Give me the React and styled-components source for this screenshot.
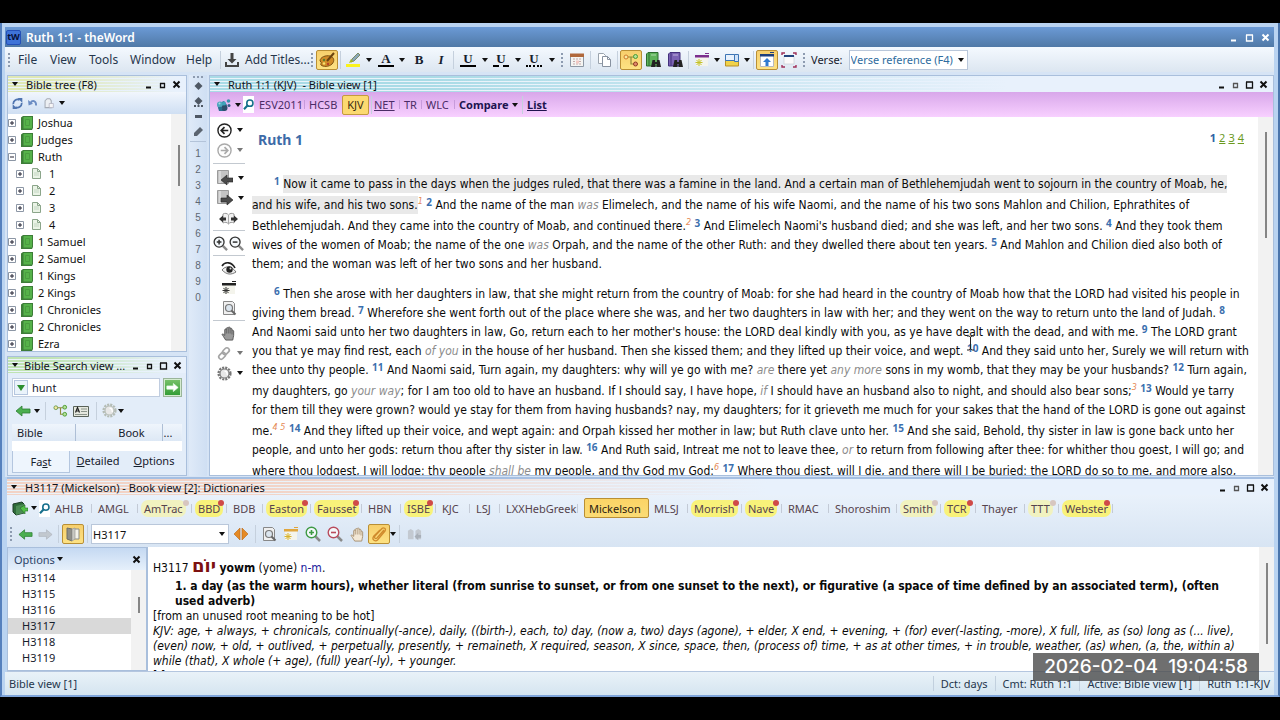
import React from "react"
import styled, { createGlobalStyle, css } from "styled-components"

const GlobalStyle = createGlobalStyle`
  * { box-sizing: border-box; }
  body {
    margin: 0;
    background: #000;
    font-family: "Noto Sans", "Open Sans", sans-serif;
    font-size: 11px;
    color: #16202c;
  }
  button, input, select { font: inherit; color: inherit; margin: 0; }
  button { border: 0; background: none; padding: 0; }
  a { color: inherit; }
  svg { display: block; flex: none; }
`

const Page = styled.div`
  display: flex;
  flex-direction: column;
  height: 100vh;
  padding: 23px 0;
  background: #000;
`

const Window = styled.div`
  position: relative;
  flex: 1;
  min-height: 0;
  display: flex;
  flex-direction: column;
  padding: 4px 4px 0 3px;
  border-left: 2px solid #5580bd;
  border-right: 2px solid #4a74ab;
  border-bottom: 2px solid #7fa5da;
  background: #b9d3f1;
`

const TitleBar = styled.header`
  display: flex;
  align-items: center;
  height: 20px;
  padding: 0 4px 0 1px;
  gap: 5px;
  color: #fff;
  background: linear-gradient(#6b9ad6, #5079a6);
`

const AppTitle = styled.h1`
  flex: 1;
  margin: 0;
  font-size: 12px;
  font-weight: 600;
`

const Logo = styled.span`
  width: 15px;
  height: 15px;
  border: 1px solid #2450b8;
  border-radius: 2px;
  background: #3f73d8;
  color: #06103a;
  font-size: 9px;
  font-weight: 700;
  line-height: 12px;
  text-align: center;
`

const WinButtons = styled.div`
  display: flex;
  align-items: center;
  gap: ${p => p.$gap || 5}px;
  margin-left: auto;
`

const ToolBar = styled.div`
  display: flex;
  align-items: center;
  height: ${p => p.$h || 25}px;
  background: ${p => p.$plain ? "none" : "linear-gradient(#f4f9fe, #dce6f1)"};
`

const MenuButton = styled.button`
  width: ${p => p.$w}px;
  padding-left: 5px;
  font-size: 12px;
  text-align: left;
  white-space: nowrap;
  color: #26364c;
`

const ToolButton = styled.button`
  display: flex;
  align-items: center;
  justify-content: center;
  flex: none;
  width: ${p => p.$w || 22}px;
  height: 20px;
  ${p => p.$on && css`
    border: 1px solid #b98f35;
    border-radius: 2px;
    background: linear-gradient(#f7cf6c, #fde283);
  `}
`

const Glyph = styled.span`
  font-family: "Liberation Serif", serif;
  font-size: 13px;
  font-weight: 700;
  line-height: 12px;
  font-style: ${p => p.$italic ? "italic" : "normal"};
  border-bottom: ${p => p.$line ? `2px ${p.$line} #000` : "0"};
  padding: 0 ${p => p.$line ? 3 : 0}px;
`

const Sep = styled.i`
  flex: none;
  width: 1px;
  height: 18px;
  margin: 0 ${p => p.$m || 3}px;
  background: #c5d0dd;
`

const Grip = styled.i`
  flex: none;
  width: 2px;
  height: 14px;
  margin: 0 3px;
  background: repeating-linear-gradient(#8d9bb0 0 2px, transparent 2px 4px);
`

const VerseLabel = styled.label`
  display: flex;
  align-items: center;
  gap: 6px;
  margin-left: 3px;
`

const Select = styled.select`
  appearance: none;
  height: 20px;
  width: ${p => p.$w}px;
  padding: 0 1px;
  border: 1px solid #b9c7da;
  border-radius: 0;
  color: ${p => p.$color || "#111"};
  background: #fff;
`

const SelectBox = styled.span`
  position: relative;
  display: flex;
  svg { position: absolute; right: 4px; top: 8px; pointer-events: none; }
`

const Work = styled.div`
  flex: 1;
  min-height: 0;
  display: flex;
  gap: 2px;
  padding: 3px 0 1px 2px;
  background: #d6e4f5;
`

const Left = styled.aside`
  flex: none;
  width: 180px;
  display: flex;
  flex-direction: column;
  gap: 4px;
`

const Panel = styled.section`
  flex: ${p => p.$grow ? "1" : "none"};
  min-width: 0;
  min-height: 0;
  display: flex;
  flex-direction: column;
  border: 1px solid #a9bfdc;
  background: ${p => p.$bg || "#fff"};
`

const PanelHead = styled.header`
  flex: none;
  display: flex;
  align-items: center;
  gap: ${p => p.$tight ? 6 : 8}px;
  height: 16px;
  padding: 0 5px 0 4px;
  color: #10141c;
  background:
    linear-gradient(90deg, transparent 20%, #e8f1fc ${p => p.$to || "95%"}),
    repeating-linear-gradient(${p => p.$tint} 0 2px, #eaf3fa 2px 3px);
`

const PanelTitle = styled.h2`
  margin: 0;
  font-size: 11px;
  font-weight: 400;
  white-space: pre;
`

const TreeTools = styled.div`
  display: flex;
  align-items: center;
  gap: 5px;
  height: 22px;
  padding-left: 4px;
  background: linear-gradient(#f1f6fd, #cfdff3);
`

const Scroller = styled.div`
  flex: 1;
  min-height: 0;
  display: flex;
  overflow: hidden;
  background: #fff;
`

const Track = styled.div`
  flex: none;
  width: ${p => p.$w || 15}px;
  padding-top: ${p => p.$top}px;
  background: #f2f2f2;
`

const Thumb = styled.div`
  width: 2px;
  height: ${p => p.$h}px;
  margin: 0 auto;
  background: #858585;
`

const Tree = styled.ul`
  flex: 1;
  margin: 0;
  padding: 0;
  list-style: none;
  overflow: hidden;
`

const TreeRow = styled.li`
  display: flex;
  align-items: center;
  gap: ${p => p.$leaf ? 8 : 5}px;
  height: 17px;
  line-height: 16px;
  padding-left: ${p => p.$leaf ? 8 : 0}px;
  color: #111;
`

const SearchBody = styled.div`
  display: flex;
  flex-direction: column;
  padding: 5px 4px 2px;
`

const SearchRow = styled.form`
  display: flex;
  align-items: center;
  gap: 3px;
  height: 19px;
`

const SearchField = styled.div`
  flex: 1;
  min-width: 0;
  display: flex;
  align-items: center;
  gap: 2px;
  height: 19px;
  padding: 1px;
  border: 1px solid #c0cde0;
  background: #fff;
`

const DropButton = styled.button`
  display: flex;
  align-items: center;
  justify-content: center;
  width: 14px;
  height: 15px;
  border: 1px solid #b5c6df;
  background: #eaf3fb;
`

const SearchInput = styled.input`
  flex: 1;
  min-width: 0;
  height: 15px;
  border: 0;
  padding: 0 2px;
  outline: 0;
  background: none;
`

const GoButton = styled.button`
  display: flex;
  align-items: center;
  justify-content: center;
  flex: none;
  width: 19px;
  height: 19px;
  border: 1px solid #9ab59a;
  background: linear-gradient(#7ac36b, #2f9b33);
  box-shadow: inset 0 0 0 1px #d5ecd0;
`

const ResultTable = styled.table`
  width: 100%;
  height: 27px;
  border-collapse: collapse;
  background: #fff;
  thead { background: linear-gradient(#eff5fc, #dde8f5); }
  th {
    height: 17px;
    padding: 0 5px;
    border-right: 1px solid #aebfd6;
    font-weight: 400;
    text-align: left;
  }
  th + th { text-align: right; padding-right: 17px; }
  th:last-child { border: 0; padding: 0 1px; text-align: left; }
  td { padding: 0; height: 10px; }
`

const SearchTabs = styled.div`
  display: flex;
  height: 22px;
`

const SearchTab = styled.button`
  flex: 1;
  padding-bottom: ${p => p.$on ? 0 : 3}px;
  border: ${p => p.$on ? "1px solid #b4c6df" : "0"};
  border-top: 0;
  background: ${p => p.$on ? "#eef5fd" : "none"};
`

const Dock = styled.nav`
  flex: none;
  display: flex;
  flex-direction: column;
  align-items: center;
  width: 18px;
  background: linear-gradient(90deg, #dfeaf8, #cfdff3);
  font-family: "Liberation Sans", sans-serif;
  color: #5e6773;
`

const DockGrip = styled.i`
  width: 10px;
  height: 2px;
  margin: 1px 0;
  background: repeating-linear-gradient(90deg, #8d9bb0 0 2px, transparent 2px 4px);
`

const DockButton = styled.button`
  height: ${p => p.$h || 16}px;
  width: 16px;
  font-size: 10px;
  display: flex;
  align-items: center;
  justify-content: center;
`

const DockRule = styled.i`
  width: 16px;
  height: 1px;
  margin: 2px 0 3px;
  background: #b3c3d9;
`

const PinkBar = styled.nav`
  flex: none;
  display: flex;
  align-items: center;
  height: 25px;
  padding-left: 6px;
  background: linear-gradient(#d8a7ea, #f8d0ff);
  color: #4b2c66;
`

const VersionTab = styled.button`
  width: ${p => p.$w}px;
  height: 20px;
  text-align: ${p => p.$on ? "center" : "left"};
  font-weight: ${p => p.$bold ? 700 : 400};
  text-decoration: ${p => p.$u ? "underline" : "none"};
  white-space: nowrap;
  ${p => p.$line && css`
    background: linear-gradient(#c79bdb, #c79bdb) no-repeat right 4px center / 1px 9px;
  `}
  ${p => p.$bold && css`color: #20134f;`}
  ${p => p.$on && css`
    border: 1px solid #c39a3e;
    border-radius: 2px;
    background: #fcd971;
    color: #3a2c10;
  `}
`

const FindButton = styled.button`
  display: flex;
  align-items: center;
  justify-content: center;
  width: 11px;
  height: 17px;
  margin-right: 5px;
  background: #fff;
`

const SideTools = styled.nav`
  flex: none;
  width: 34px;
  margin-left: 2px;
  padding-top: 3px;
  display: flex;
  flex-direction: column;
`

const SideRow = styled.div`
  display: flex;
  align-items: center;
  gap: ${p => p.$gap || 5}px;
  height: 20px;
  padding-left: ${p => p.$pad || 5}px;
`

const SideRule = styled.i`
  height: 1px;
  margin: ${p => p.$wide ? "3px 1px 4px" : "2px 1px"};
  background: #c3c9d0;
`

const Passage = styled.article`
  flex: 1;
  min-width: 0;
  padding: 13px 2px 0 6px;
  overflow: hidden;
  color: #0b0b0b;
`

const PassageHead = styled.header`
  display: flex;
  align-items: flex-start;
  justify-content: space-between;
  padding: 0 12px 0 6px;
  height: 45px;
`

const Chapter = styled.h3`
  margin: 0;
  font-size: 14px;
  line-height: 20px;
  color: #3d6ba8;
`

const Chapters = styled.nav`
  display: flex;
  gap: 3px;
  line-height: 16px;
  color: #6b9a1f;
  b { color: #2f62a5; }
`

const Para = styled.p`
  margin: 0 0 11px;
  font-family: "DejaVu Sans Condensed", "DejaVu Sans", sans-serif;
  font-size: 12px;
`

const Line = styled.span`
  display: block;
  height: ${p => p.$tall ? 21 : 19}px;
  line-height: ${p => p.$tall ? 23 : 19}px;
  padding-left: ${p => p.$first ? 22 : 0}px;
  white-space: nowrap;
  em { color: #8c8c8c; }
  mark { color: inherit; background: #e9e9e9; padding: 2px 0; }
`

const Verse = styled.b`
  font-family: "Noto Sans", sans-serif;
  font-size: 10px;
  line-height: 0;
  position: relative;
  top: -3px;
  color: #3b6fae;
`

const Note = styled.i`
  font-size: 9px;
  line-height: 0;
  position: relative;
  top: -5px;
  color: #e58a57;
`

const Caret = styled.svg.attrs({ viewBox: "0 0 6 4", width: 6, height: 4 })`
  fill: ${p => p.$c || "#111"};
`

const Beam = styled.svg`
  position: absolute;
  left: 964px;
  top: 312px;
`

const Book = styled.section`
  flex: none;
  display: flex;
  flex-direction: column;
  height: 195px;
  margin-left: 2px;
  border-top: 2px solid #a5bfe2;
  border-bottom: 1px solid #b4c6df;
  background: linear-gradient(#eef5fd, #d7e4f3 70px);
`

const DictTabs = styled.nav`
  display: flex;
  align-items: center;
  height: 26px;
  padding-left: 5px;
`

const DictTab = styled.button`
  position: relative;
  width: ${p => p.$w}px;
  height: 20px;
  text-align: left;
  white-space: nowrap;
  color: #55434d;
  background: linear-gradient(#c3cad6, #c3cad6) no-repeat right 6px center / 1px 9px;
  ${p => p.$on && css`
    margin: 0 5px 0 0;
    padding-left: 4px;
    border: 1px solid #b98f35;
    border-radius: 2px;
    background: linear-gradient(#fbd466, #fbdc75);
    color: #2b2110;
  `}
`

const Tint = styled.span`
  padding: 1px 3px;
  margin: 0 -3px;
  border-radius: 7px;
  background: ${p => p.$c};
`

const Dot = styled.i`
  position: absolute;
  right: 9px;
  top: 2px;
  width: 6px;
  height: 6px;
  border-radius: 3px;
  background: ${p => p.$pale ? "#d7c6c0" : "#cf4a48"};
`

const BookBody = styled.div`
  flex: 1;
  min-height: 0;
  display: flex;
  background: #fff;
`

const Options = styled.aside`
  flex: none;
  width: 141px;
  display: flex;
  flex-direction: column;
  border: 1px solid #a9bfdc;
  border-right-width: 2px;
`

const OptionsHead = styled.header`
  display: flex;
  align-items: center;
  justify-content: space-between;
  height: 22px;
  padding: 0 5px 0 6px;
  background: linear-gradient(#c5d9f2, #e6f0fb);
`

const OptionsMenu = styled.button`
  display: flex;
  align-items: center;
  gap: 2px;
  color: #2c4366;
`

const KeyList = styled.ul`
  flex: 1;
  margin: 0;
  padding: 0;
  list-style: none;
`

const KeyItem = styled.li`
  height: 16px;
  line-height: 16px;
  padding-left: 14px;
  background: ${p => p.$on ? "#d9d9d9" : "none"};
`

const Entry = styled.article`
  flex: 1;
  min-width: 0;
  padding: 11px 0 0 5px;
  overflow: hidden;
  font-family: "DejaVu Sans Condensed", "DejaVu Sans", sans-serif;
  font-size: 12px;
  line-height: 15px;
  color: #0a0a0a;
  white-space: nowrap;
`

const Headword = styled.p`
  margin: 0;
  height: 21px;
  line-height: 21px;
  a { color: #1a1a9c; text-decoration: none; }
`

const Hebrew = styled.bdo`
  font-family: "DejaVu Sans", sans-serif;
  font-size: 18px;
  line-height: 0;
  font-weight: 700;
  color: #7d1010;
`

const Sense = styled.p`
  margin: 0;
  padding-left: 22px;
  font-weight: 700;
`

const Gloss = styled.p`
  margin: 0;
  font-style: ${p => p.$italic ? "italic" : "normal"};
`

const Status = styled.footer`
  flex: none;
  display: flex;
  align-items: center;
  height: 23px;
  padding: 0 4px;
  background: linear-gradient(#e9f2f8, #d5e5f0);
  color: #26364c;
`

const StatusCell = styled.span`
  padding: 0 7px;
  border-left: 1px solid #c2d0de;
  &:first-of-type { margin-left: auto; }
  &:last-of-type { padding-right: 0; }
`

const Stamp = styled.time`
  position: absolute;
  right: 19px;
  bottom: 14px;
  height: 28px;
  padding: 0 11px;
  line-height: 28px;
  font-family: Inter, "Liberation Sans", sans-serif;
  font-size: 19px;
  font-weight: 500;
  white-space: pre;
  color: #fff;
  background: rgba(70, 70, 70, 0.78);
`

const Down = ({ c }) => <Caret $c={c}><path d="M0 0h6L3 4z" /></Caret>

const WinIcon = ({ kind, c = "#111", size = 9 }) => (
  <svg width={size} height="9" viewBox="0 0 9 9" fill="none" stroke={c} strokeWidth="2">
    {kind === "min" && <path d="M2 7.5h5" />}
    {kind === "small" && <path d="M2 3.5h5M2.5 3v4.5h4V3" strokeWidth="1.3" />}
    {kind === "max" && <path d="M1 2h7M1.5 2v6h6V2M1 8h7" strokeWidth="1.3" />}
    {kind === "close" && <path d="M1.5 1.5l6 6M7.5 1.5l-6 6" />}
  </svg>
)

const Icon = ({ s = 16, children }) => (
  <svg width={s} height={s} viewBox="0 0 16 16" fill="none">{children}</svg>
)

const Arrow = ({ s, left, fill = "#4caf50", stroke = "#2e7d32" }) => (
  <Icon s={s}>
    <path d={left ? "M1 8l6-5v3h8v4H7v3z" : "M15 8L9 3v3H1v4h8v3z"} fill={fill} stroke={stroke} strokeWidth=".8" />
  </Icon>
)

const AddIcon = () => (
  <Icon>
    <path d="M6.5 1h3v6h3L8 11.500 3.500 7h3z" fill="#444" />
    <path d="M2 10v4h12v-4" stroke="#444" strokeWidth="2" />
  </Icon>
)

const PaletteIcon = () => (
  <Icon>
    <path d="M1 9c0-4 6-6 10-5 4 1 5 5 2 8-3 3-9 3-11 1-1-1 1-2 0-3z" fill="#d08c28" stroke="#7d5112" />
    <path d="M15 1L8 9" stroke="#6b430f" strokeWidth="2" />
    <circle cx="5" cy="11.500" r="1.200" fill="#f4e070" /><circle cx="9" cy="12" r="1.200" fill="#b7442b" />
    <circle cx="5" cy="8" r="1.200" fill="#5c7f2c" />
  </Icon>
)

const MarkerIcon = () => (
  <Icon>
    <path d="M13 1l2 2-6 6-3 1 1-3z" fill="#8aa7b8" stroke="#6b7b4a" strokeWidth=".8" />
    <path d="M6 7l2.500 2.500L4 11z" fill="#a3b31c" />
    <path d="M1 12h14v3H1z" fill="#fbf31b" />
  </Icon>
)

const CalendarIcon = () => (
  <Icon>
    <path d="M1.500 2.500h13v12h-13z" fill="#f4f4f2" stroke="#8d98a5" />
    <path d="M1 1.500h14V5H1z" fill="#b0683c" />
    <path d="M4 7h8M4 9.500h8M4 12h8" stroke="#c3a9a9" strokeDasharray="2 1" />
    <path d="M7 8.500h3v3H7z" fill="#f3c9c4" />
  </Icon>
)

const CopyIcon = () => (
  <Icon>
    <path d="M2.500 1.500h5l2 2v8h-7z" fill="#fff" stroke="#9aa3ad" />
    <path d="M6.500 4.500h5l3 3v7h-8z" fill="#fff" stroke="#8892a0" />
    <path d="M11.500 4.500v3h3" stroke="#8892a0" />
  </Icon>
)

const GraphIcon = ({ s, hub = "#e0886c", rim = "#8f3b22", root = "#d07b2b" }) => (
  <Icon s={s}>
    <path d="M4 5h8M8 5v7h4" stroke="#8f8a3a" strokeWidth="1.200" />
    <circle cx="3" cy="5" r="2" fill="#f7e9a0" stroke={root} />
    <circle cx="12.500" cy="4.500" r="2" fill="#b4e19a" stroke="#4d9b32" />
    <circle cx="12.500" cy="12" r="2" fill={hub} stroke={rim} />
  </Icon>
)

const BookFindIcon = ({ a, b }) => (
  <Icon>
    <path d="M1.500 2L3 .5h10V14H1.500z" fill={a} stroke={b} />
    <path d="M4 1v13" stroke={b} />
    <path d="M6 3h5" stroke="#fff" strokeOpacity=".5" />
    <path d="M7.500 8h2.500l.5 7H6zM12 8h2.500l1.500 7h-4.500zM9 10h3v2H9z" fill="#222" />
  </Icon>
)

const NewWindowIcon = ({ top = "#7b2f8e", star = "#c4c229" }) => (
  <Icon>
    <path d="M2 5h12v9H2z" fill="#f4f4ec" />
    <path d="M1 3h14v2.500H1z" fill={top} /><path d="M11 1h4v1h-4z" fill={top} />
    <path d="M5 7v7M1.500 10.500h7M2.500 8l5 5M7.500 8l-5 5" stroke={star} />
  </Icon>
)

const LayoutIcon = () => (
  <Icon>
    <path d="M1.500 3.500h13v10.500h-13z" fill="#f0d24a" stroke="#b89026" />
    <path d="M1.500 2.500h9v6h-9z" fill="#e7f1fc" stroke="#3c75b5" />
    <path d="M10.500 2.500h4v7h-4z" fill="#cfe2f8" stroke="#3c75b5" />
  </Icon>
)

const UpWindowIcon = () => (
  <Icon>
    <path d="M1.500 3.500h13v11h-13z" fill="#fff" stroke="#b7bac0" />
    <path d="M1 2h14v2.500H1zM11 0h4v1h-4z" fill="#1d3f7d" />
    <path d="M8 6l4 4H9.500v4h-3v-4H4z" fill="#2f79cf" />
  </Icon>
)

const FullIcon = () => (
  <Icon>
    <path d="M3 4h10v8H3z" fill="#fafafa" stroke="#c2c9d2" strokeWidth=".6" />
    <path d="M3 3h10v2H3z" fill="#23447e" />
    <path d="M1 3V1h3M12 1h3v2M15 13v2h-3M4 15H1v-2" stroke="#a03058" strokeWidth="1.400" />
  </Icon>
)

const PlusBox = ({ open }) => (
  <svg width="8" height="8" viewBox="0 0 8 8">
    <path d="M.5.5h7v7h-7z" fill="#fff" stroke="#8c96a5" />
    <path d={open ? "M2 4h4" : "M2 4h4M4 2v4"} stroke="#223" />
  </svg>
)

const BookIcon = () => (
  <svg width="12" height="14" viewBox="0 0 12 14">
    <path d="M0 1.500L2 0h10v12l-1 2H0z" fill="#3d7d38" />
    <path d="M2.500 1H11v11.500H2.500z" fill="#56b24a" />
    <path d="M4.500 3.500h4v6h-4z" fill="none" stroke="#4a9c40" />
  </svg>
)

const PageIcon = () => (
  <svg width="9" height="11" viewBox="0 0 9 11">
    <path d="M.5.5h5l3 3v7h-8z" fill="#eaf3e6" stroke="#8ba58a" />
    <path d="M5.500.5v3h3" fill="none" stroke="#8ba58a" />
    <path d="M2 5h5M2 7h5" fill="none" stroke="#c3d6c2" />
  </svg>
)

const RefreshIcon = () => (
  <Icon s={11}>
    <path d="M2 9a6 6 0 0 1 9-6M14 7a6 6 0 0 1-9 6" stroke="#4f74b0" strokeWidth="2.500" />
    <path d="M8 0h7v7zM8 16H1V9z" fill="#4f74b0" />
  </Icon>
)

const UndoIcon = () => (
  <Icon s={10}>
    <path d="M4 8c3-5 9-4 9 4" stroke="#6c8dc4" strokeWidth="3" />
    <path d="M0 3l1 9 7-3z" fill="#6c8dc4" />
  </Icon>
)

const TagIcon = () => (
  <Icon s={11}>
    <path d="M3 4l3-3h4l2 3v10H3z" fill="#eceff3" stroke="#a5abb5" strokeWidth="1.500" />
    <path d="M9 8h6v6H9z" fill="#f7f7f7" stroke="#aab" />
  </Icon>
)

const GearIcon = ({ s, c = "#777" }) => (
  <Icon s={s}>
    <circle cx="8" cy="8" r="6.300" stroke={c} strokeWidth="2.500" strokeDasharray="2.200 1.100" />
    <circle cx="8" cy="8" r="4.800" fill="#e7e7e7" stroke={c} strokeWidth="1.200" />
    <path d="M8 5.500c2.500 0 3 2 3 4" stroke="#fff" strokeWidth="1.500" />
  </Icon>
)

const CardIcon = () => (
  <Icon>
    <path d="M.5 3.500h15v10H.5z" fill="#e5e8df" stroke="#596259" />
    <path d="M8 6h6M8 8.500h6M2 11.500h12" stroke="#8b948b" />
    <path d="M2.500 9.500l2-5 2 5M3 8h3" stroke="#222" strokeWidth="1.200" />
  </Icon>
)

const LensIcon = ({ s, c, sign }) => (
  <Icon s={s}>
    <path d="M10.500 10.500L15 15" stroke="#8a8a8a" strokeWidth="2.500" />
    <circle cx="6.500" cy="6.500" r="5.300" fill="#f4f8fb" stroke={c} strokeWidth="1.400" />
    <path d={sign === "+" ? "M4 6.500h5M6.500 4v5" : "M4 6.500h5"} stroke={c} strokeWidth="1.600" />
  </Icon>
)

const HandleLens = () => (
  <Icon s={11}>
    <circle cx="10" cy="6" r="4.500" stroke="#17708c" strokeWidth="2.300" />
    <path d="M6.500 9.500L1.500 15" stroke="#17708c" strokeWidth="3" />
  </Icon>
)

const RoundArrow = ({ left, c }) => (
  <Icon s={15}>
    <circle cx="8" cy="8" r="7" fill="#fdfdfd" stroke={c} strokeWidth="1.500" />
    <path d={left ? "M12 8H5M8 4.500L4.500 8 8 11.500" : "M4 8h7M8 4.500L11.500 8 8 11.500"} stroke={c} strokeWidth="1.800" />
  </Icon>
)

const BookArrow = ({ left }) => (
  <Icon>
    <path d="M.5.500h11v13H.5z" fill="#c4c4c4" stroke="#9b9b9b" />
    <path d="M3 1v12" stroke="#eee" />
    <path d={left ? "M4 10l6-5v3h6v4h-6v3z" : "M16 10l-6-5v3H4v4h6v3z"} fill="#4a4a4a" stroke="#222" strokeWidth=".6" />
  </Icon>
)

const OpenBook = () => (
  <svg width="19" height="13" viewBox="0 0 19 13">
    <path d="M4 2c2-1 4-1 5.500 1C11 1 13 1 15 2v9c-2-1-4-1-5.500 1C8 10 6 10 4 11z" fill="#f2f2f2" stroke="#999" />
    <path d="M0 7l4-3.500v2h3v3H4v2zM19 7l-4-3.500v2h-3v3h3v2z" fill="#333" />
    <path d="M9.500 3v9" stroke="#aaa" />
  </svg>
)

const EyeIcon = () => (
  <Icon>
    <path d="M1 6c3-5 10-4 13 2" stroke="#222" strokeWidth="1.600" />
    <path d="M1 10c3-4 9-5 14 2-5 3-9 3-14-2z" fill="#eee" stroke="#555" strokeWidth=".8" />
    <circle cx="8.500" cy="9.500" r="3.200" fill="#222" /><circle cx="9.500" cy="8.500" r="1" fill="#ddd" />
  </Icon>
)

const PreviewIcon = () => (
  <Icon>
    <path d="M2.500 1.500h9l2 2v11h-11z" fill="#efefef" stroke="#888" />
    <circle cx="8" cy="8" r="3.500" fill="#dbe5ee" stroke="#777" strokeWidth="1.200" />
    <path d="M10.500 10.500l4 4" stroke="#666" strokeWidth="2" />
  </Icon>
)

const HandIcon = ({ fill = "#9a9a9a", stroke = "#555" }) => (
  <Icon s={15}>
    <path d="M5 15c-2-3-3-5-4-6 1-1 2 0 3 1V4c0-1 1.500-1 1.700 0V2.500c.2-1 1.800-1 2 0V1.800c.2-1 1.800-1 2 0V3c.3-1 1.800-.8 2 .2V5c.5-.8 1.600-.5 1.800.4V10c0 2-1 3-1 5z" fill={fill} stroke={stroke} />
    <path d="M5.700 4v4M7.700 3v5M9.700 3v5M11.700 5v4" stroke={stroke} strokeWidth=".8" />
  </Icon>
)

const LinkIcon = () => (
  <Icon s={15}>
    <g stroke="#a5a5a5" strokeWidth="1.800">
      <rect x="7" y="1.500" width="5" height="8" rx="2.500" transform="rotate(45 9.500 5.500)" />
      <rect x="3" y="6.500" width="5" height="8" rx="2.500" transform="rotate(45 5.500 10.500)" />
    </g>
  </Icon>
)

const ClipIcon = () => (
  <Icon>
    <path d="M13 4L6 12c-1 1.500-3.500 0-2-2l7-7.500c1.500-1.500 4.500 0 3 2.500l-7.500 9c-2 2-6 0-4-3.500L9 4" stroke="#d08b2c" strokeWidth="1.300" />
  </Icon>
)

const BoxIcon = () => (
  <Icon>
    <path d="M1 4l9-2 2 2v9l-8 2-3-3z" fill="#2f6b3a" stroke="#1e3c28" />
    <path d="M4 6l8-2v9l-8 2z" fill="#4c8c55" />
    <path d="M8 8l5-3v3h3v3h-3v3z" fill="#55c04a" stroke="#226b22" strokeWidth=".6" />
  </Icon>
)

const BubblesIcon = () => (
  <Icon>
    <path d="M1 7l7-3 3 4-2 6H3z" fill="#2c6f93" />
    <circle cx="4" cy="7.500" r="3" fill="#4fa9bf" /><circle cx="8.500" cy="11" r="3" fill="#2d4f6d" />
    <circle cx="8" cy="6.500" r="2" fill="#3fa3ba" /><circle cx="4.500" cy="11.500" r="1.800" fill="#2b6f8e" />
    <circle cx="12.500" cy="4" r="1.800" fill="#3593ad" /><circle cx="13" cy="8.500" r="1.500" fill="#355f8a" />
    <circle cx="3.500" cy="6.500" r="1" fill="#a6dbe6" />
  </Icon>
)

const PagesIcon = () => (
  <Icon>
    <path d="M2 2l5 1v12l-5-2z" fill="#8f8f88" stroke="#6e6e66" />
    <path d="M9 3h5v10H9z" fill="#f4f3ea" stroke="#8e8e86" />
    <path d="M7 3l3-1v11l-3 2z" fill="#c9c9c2" stroke="#999" strokeWidth=".7" />
  </Icon>
)

const NextPrev = () => (
  <Icon>
    <path d="M7 2v12L1 8z" fill="#e58a25" stroke="#b96512" strokeWidth=".6" />
    <path d="M9 2v12l6-6z" fill="#e58a25" stroke="#b96512" strokeWidth=".6" />
  </Icon>
)

const SyncIcon = () => (
  <Icon s={15}>
    <path d="M1 4l3-2 3 2v9H1zM9 4l3-2 3 2v9H9z" fill="#c3c9d1" />
    <path d="M8 10l4-4v2.500h3v3h-3V14z" fill="#a8afb8" />
  </Icon>
)

const Diamond = ({ dots }) => (
  <svg width="9" height="10" viewBox="0 0 9 10" fill="#4f5864">
    <path d="M4.500 0l4 4-4 4-4-4z" />
    {dots && <path d="M0 8h2v2H0zM3.500 8h2v2h-2zM7 8h2v2H7z" />}
  </svg>
)

const books = [
  ["Joshua"], ["Judges"], ["Ruth", true], ["1", false, true], ["2", false, true],
  ["3", false, true], ["4", false, true], ["1 Samuel"], ["2 Samuel"], ["1 Kings"],
  ["2 Kings"], ["1 Chronicles"], ["2 Chronicles"], ["Ezra"],
]

const dicts = [
  ["AHLB", 43], ["AMGL", 46], ["AmTrac", 54, "pale"], ["BBD", 35, "hot"], ["BDB", 36],
  ["Easton", 48, "hot"], ["Fausset", 51, "hot"], ["HBN", 39], ["ISBE", 35, "hot"],
  ["KJC", 34], ["LSJ", 30], ["LXXHebGreek", 78], ["Mickelson", 65, "on"], ["MLSJ", 40],
  ["Morrish", 54, "hot"], ["Nave", 40, "hot"], ["RMAC", 47], ["Shoroshim", 68],
  ["Smith", 44, "pale"], ["TCR", 35, "hot"], ["Thayer", 49], ["TTT", 34, "pale"], ["Webster", 54, "hot"],
]

const keys = ["H3114", "H3115", "H3116", "H3117", "H3118", "H3119"]

function MainTools() {
  return (
    <ToolBar>
      <Grip />
      <MenuButton $w={32}>File</MenuButton>
      <MenuButton $w={39}>View</MenuButton>
      <MenuButton $w={41}>Tools</MenuButton>
      <MenuButton $w={56}>Window</MenuButton>
      <MenuButton $w={36}>Help</MenuButton>
      <Sep />
      <ToolButton $w={16} aria-label="Add"><AddIcon /></ToolButton>
      <MenuButton $w={68}>Add Titles...</MenuButton>
      <Grip />
      <ToolButton $on aria-label="Palette"><PaletteIcon /></ToolButton>
      <Sep $m={2} />
      <ToolButton $w={20} aria-label="Highlight"><MarkerIcon /></ToolButton>
      <ToolButton $w={11} aria-label="Highlight colours"><Down /></ToolButton>
      <ToolButton $w={24} aria-label="Text colour"><Glyph $line="solid">A</Glyph></ToolButton>
      <ToolButton $w={8} aria-label="Text colours"><Down /></ToolButton>
      <ToolButton $w={26} aria-label="Bold"><Glyph>B</Glyph></ToolButton>
      <ToolButton $w={18} aria-label="Italic"><Glyph $italic>I</Glyph></ToolButton>
      <Sep />
      <ToolButton aria-label="Underline"><Glyph $line="solid">U</Glyph></ToolButton>
      <ToolButton $w={11} aria-label="Underline styles"><Down /></ToolButton>
      <ToolButton aria-label="Dashed underline"><Glyph $line="dashed">U</Glyph></ToolButton>
      <ToolButton $w={11} aria-label="Dash styles"><Down /></ToolButton>
      <ToolButton aria-label="Dotted underline"><Glyph $line="dotted">U</Glyph></ToolButton>
      <ToolButton $w={13} aria-label="Dot styles"><Down /></ToolButton>
      <Grip />
      <ToolButton aria-label="Calendar"><CalendarIcon /></ToolButton>
      <Sep $m={2} />
      <ToolButton aria-label="Copy"><CopyIcon /></ToolButton>
      <Sep $m={2} />
      <ToolButton $on aria-label="Tree"><GraphIcon /></ToolButton>
      <ToolButton aria-label="Search Bible"><BookFindIcon a="#5fb45c" b="#2c6b30" /></ToolButton>
      <ToolButton aria-label="Search books"><BookFindIcon a="#7b62b4" b="#43307c" /></ToolButton>
      <Sep $m={2} />
      <ToolButton aria-label="New view"><NewWindowIcon /></ToolButton>
      <ToolButton $w={8} aria-label="View kinds"><Down /></ToolButton>
      <ToolButton aria-label="Layouts"><LayoutIcon /></ToolButton>
      <ToolButton $w={8} aria-label="Layout list"><Down /></ToolButton>
      <Sep $m={2} />
      <ToolButton $on aria-label="Raise window"><UpWindowIcon /></ToolButton>
      <ToolButton aria-label="Full screen"><FullIcon /></ToolButton>
      <Grip />
      <VerseLabel>
        Verse:
        <SelectBox>
          <Select $w={119} $color="#2f6c9e"><option>Verse reference (F4)</option></Select>
          <Down />
        </SelectBox>
      </VerseLabel>
    </ToolBar>
  )
}

function BibleTree() {
  return (
    <Panel $grow>
      <PanelHead $tint="#dfe8b4">
        <Down />
        <PanelTitle>Bible tree (F8)</PanelTitle>
        <WinButtons><WinIcon kind="min" /><WinIcon kind="small" /><WinIcon kind="close" /></WinButtons>
      </PanelHead>
      <TreeTools>
        <RefreshIcon /><UndoIcon /><TagIcon /><Down />
      </TreeTools>
      <Scroller>
        <Tree>
          {books.map(([name, open, leaf]) => (
            <TreeRow key={name} $leaf={leaf}>
              <PlusBox open={open} />
              {leaf ? <PageIcon /> : <BookIcon />}
              {name}
            </TreeRow>
          ))}
        </Tree>
        <Track $top={31}><Thumb $h={41} /></Track>
      </Scroller>
    </Panel>
  )
}

function BibleSearch() {
  return (
    <Panel $bg="#e3edf9">
      <PanelHead $tight $tint="#bfe3b2">
        <Down />
        <PanelTitle>Bible Search view ...</PanelTitle>
        <WinButtons><WinIcon kind="min" /><WinIcon kind="small" /><WinIcon kind="max" /><WinIcon kind="close" /></WinButtons>
      </PanelHead>
      <SearchBody>
        <SearchRow>
          <SearchField>
            <DropButton type="button" aria-label="History">
              <svg width="8" height="6" viewBox="0 0 8 6"><path d="M0 0h8L4 6z" fill="#2c8f30" /></svg>
            </DropButton>
            <SearchInput aria-label="Search" defaultValue="hunt" />
          </SearchField>
          <GoButton type="button" aria-label="Go"><Arrow s={13} fill="#fff" stroke="#e8ffe8" /></GoButton>
        </SearchRow>
        <ToolBar $plain $h={27}>
          <ToolButton aria-label="Back"><Arrow left /></ToolButton>
          <Down />
          <Sep $m={5} />
          <ToolButton $w={18} aria-label="Tree"><GraphIcon s={15} hub="#b4e19a" rim="#4d9b32" root="#6b9b52" /></ToolButton>
          <ToolButton $w={24} aria-label="Card"><CardIcon /></ToolButton>
          <Sep />
          <ToolButton $w={18} aria-label="Settings"><GearIcon s={15} c="#b5bcb5" /></ToolButton>
          <Down />
        </ToolBar>
        <ResultTable>
          <thead><tr><th>Bible</th><th>Book</th><th>...</th></tr></thead>
          <tbody><tr><td /><td /><td /></tr></tbody>
        </ResultTable>
        <SearchTabs>
          <SearchTab $on>Fa<u>s</u>t</SearchTab>
          <SearchTab><u>D</u>etailed</SearchTab>
          <SearchTab><u>O</u>ptions</SearchTab>
        </SearchTabs>
      </SearchBody>
    </Panel>
  )
}

function DockBar() {
  return (
    <Dock>
      <DockGrip />
      <DockButton $h={15} aria-label="Pin"><Diamond /></DockButton>
      <DockButton $h={15} aria-label="More pins"><Diamond dots /></DockButton>
      <DockButton $h={15} aria-label="Remove"><svg width="7" height="3"><path d="M0 0h7v3H0z" fill="#4f5864" /></svg></DockButton>
      <DockButton $h={15} aria-label="Erase">
        <svg width="9" height="9" viewBox="0 0 9 9"><path d="M6 0l3 3-6 6H0V6z" fill="#5b6470" /></svg>
      </DockButton>
      <DockRule />
      {[1, 2, 3, 4, 5, 6, 7, 8, 9, 0].map(n => <DockButton key={n}>{n}</DockButton>)}
    </Dock>
  )
}

function SideBar() {
  return (
    <SideTools>
      <SideRow><RoundArrow left c="#222" /><Down /></SideRow>
      <SideRow><RoundArrow c="#aaa" /><Down c="#777" /></SideRow>
      <SideRule $wide />
      <SideRow><BookArrow left /><Down /></SideRow>
      <SideRow><BookArrow /><Down /></SideRow>
      <SideRow $pad={7}><OpenBook /></SideRow>
      <SideRule />
      <SideRow $pad={1} $gap={1}><LensIcon s={15} c="#333" sign="+" /><LensIcon s={15} c="#333" sign="-" /></SideRow>
      <SideRule />
      <SideRow $pad={9}><EyeIcon /></SideRow>
      <SideRow $pad={9}><NewWindowIcon top="#222" star="#333" /></SideRow>
      <SideRow $pad={9}><PreviewIcon /></SideRow>
      <SideRule />
      <SideRow $pad={9}><HandIcon /></SideRow>
      <SideRow><LinkIcon /><Down c="#777" /></SideRow>
      <SideRow><GearIcon s={15} /><Down /></SideRow>
    </SideTools>
  )
}

function RuthText() {
  return (
    <Passage>
      <PassageHead>
        <Chapter>Ruth 1</Chapter>
        <Chapters><b>1</b><a href="#2">2</a><a href="#3">3</a><a href="#4">4</a></Chapters>
      </PassageHead>
      <Para>
        <Line $first><Verse>1</Verse> <mark>Now it came to pass in the days when the judges ruled, that there was a famine in the land. And a certain man of Bethlehemjudah went to sojourn in the country of Moab, he,</mark></Line>
        <Line $tall><mark>and his wife, and his two sons.</mark><Note>1</Note>  <Verse>2</Verse> And the name of the man <em>was</em> Elimelech, and the name of his wife Naomi, and the name of his two sons Mahlon and Chilion, Ephrathites of</Line>
        <Line $tall>Bethlehemjudah. And they came into the country of Moab, and continued there.<Note>2</Note> <Verse>3</Verse> And Elimelech Naomi's husband died; and she was left, and her two sons. <Verse>4</Verse> And they took them</Line>
        <Line>wives of the women of Moab; the name of the one <em>was</em> Orpah, and the name of the other Ruth: and they dwelled there about ten years. <Verse>5</Verse> And Mahlon and Chilion died also both of</Line>
        <Line>them; and the woman was left of her two sons and her husband.</Line>
      </Para>
      <Para>
        <Line $first><Verse>6</Verse> Then she arose with her daughters in law, that she might return from the country of Moab: for she had heard in the country of Moab how that the LORD had visited his people in</Line>
        <Line>giving them bread. <Verse>7</Verse> Wherefore she went forth out of the place where she was, and her two daughters in law with her; and they went on the way to return unto the land of Judah. <Verse>8</Verse></Line>
        <Line>And Naomi said unto her two daughters in law, Go, return each to her mother's house: the LORD deal kindly with you, as ye have dealt with the dead, and with me. <Verse>9</Verse> The LORD grant</Line>
        <Line>you that ye may find rest, each <em>of you</em> in the house of her husband. Then she kissed them; and they lifted up their voice, and wept. <Verse>10</Verse> And they said unto her, Surely we will return with</Line>
        <Line>thee unto thy people. <Verse>11</Verse> And Naomi said, Turn again, my daughters: why will ye go with me? <em>are</em> there yet <em>any more</em> sons in my womb, that they may be your husbands? <Verse>12</Verse> Turn again,</Line>
        <Line $tall>my daughters, go <em>your way</em>; for I am too old to have an husband. If I should say, I have hope, <em>if</em> I should have an husband also to night, and should also bear sons;<Note>3</Note> <Verse>13</Verse> Would ye tarry</Line>
        <Line>for them till they were grown? would ye stay for them from having husbands? nay, my daughters; for it grieveth me much for your sakes that the hand of the LORD is gone out against</Line>
        <Line $tall>me.<Note>4 5</Note> <Verse>14</Verse> And they lifted up their voice, and wept again: and Orpah kissed her mother in law; but Ruth clave unto her. <Verse>15</Verse> And she said, Behold, thy sister in law is gone back unto her</Line>
        <Line>people, and unto her gods: return thou after thy sister in law. <Verse>16</Verse> And Ruth said, Intreat me not to leave thee, <em>or</em> to return from following after thee: for whither thou goest, I will go; and</Line>
        <Line $tall>where thou lodgest, I will lodge: thy people <em>shall be</em> my people, and thy God my God:<Note>6</Note> <Verse>17</Verse> Where thou diest, will I die, and there will I be buried: the LORD do so to me, and more also,</Line>
      </Para>
    </Passage>
  )
}

function BibleView() {
  return (
    <Panel $grow>
      <PanelHead $tint="#a9dbe6" $to="75%">
        <Down />
        <PanelTitle>Ruth 1:1 (KJV)  - Bible view [1]</PanelTitle>
        <WinButtons><WinIcon kind="min" /><WinIcon kind="small" c="#555" /><WinIcon kind="max" /><WinIcon kind="close" /></WinButtons>
      </PanelHead>
      <PinkBar>
        <BubblesIcon />
        <ToolButton $w={11} aria-label="Version list"><Down /></ToolButton>
        <FindButton aria-label="Find"><HandleLens /></FindButton>
        <VersionTab $w={50} $line>ESV2011</VersionTab>
        <VersionTab $w={33}>HCSB</VersionTab>
        <VersionTab $w={27} $on>KJV</VersionTab>
        <Sep $m={2} />
        <VersionTab $w={30} $u $line>NET</VersionTab>
        <VersionTab $w={22} $line>TR</VersionTab>
        <VersionTab $w={33} $line>WLC</VersionTab>
        <VersionTab $w={53} $bold>Compare</VersionTab>
        <Down />
        <Sep $m={4} />
        <VersionTab $w={20} $bold $u>List</VersionTab>
      </PinkBar>
      <Scroller>
        <SideBar />
        <RuthText />
        <Track $top={15}><Thumb $h={106} /></Track>
      </Scroller>
    </Panel>
  )
}

function BookView() {
  return (
    <Book>
      <PanelHead $tint="#f2d3c6" $to="60%">
        <Down />
        <PanelTitle>H3117 (Mickelson) - Book view [2]: Dictionaries</PanelTitle>
        <WinButtons><WinIcon kind="min" /><WinIcon kind="small" c="#555" /><WinIcon kind="max" /><WinIcon kind="close" /></WinButtons>
      </PanelHead>
      <DictTabs>
        <BoxIcon />
        <ToolButton $w={11} aria-label="Book list"><Down /></ToolButton>
        <FindButton aria-label="Find"><HandleLens /></FindButton>
        {dicts.map(([name, w, kind]) => (
          <DictTab key={name} $w={w} $on={kind === "on"}>
            {kind === "hot" || kind === "pale"
              ? <><Tint $c={kind === "hot" ? "#f8f27a" : "#f1f2c0"}>{name}</Tint><Dot $pale={kind === "pale"} /></>
              : name}
          </DictTab>
        ))}
      </DictTabs>
      <ToolBar $plain $h={26}>
        <Grip />
        <ToolButton $w={20} aria-label="Back"><Arrow s={15} left /></ToolButton>
        <ToolButton $w={20} aria-label="Forward"><Arrow s={15} fill="#c2c8cf" stroke="#b0b7bf" /></ToolButton>
        <Sep $m={3} />
        <ToolButton $on aria-label="Panels"><PagesIcon /></ToolButton>
        <Sep />
        <SelectBox>
          <Select $w={138} aria-label="Topic"><option>H3117</option></Select>
          <Down />
        </SelectBox>
        <ToolButton $w={24} aria-label="Next and previous"><NextPrev /></ToolButton>
        <Sep $m={2} />
        <ToolButton aria-label="Preview"><PreviewIcon /></ToolButton>
        <ToolButton aria-label="New"><NewWindowIcon top="#e0a63d" star="#d8b32c" /></ToolButton>
        <ToolButton aria-label="Zoom in"><LensIcon c="#3f9a44" sign="+" /></ToolButton>
        <ToolButton aria-label="Zoom out"><LensIcon c="#b94b5c" sign="-" /></ToolButton>
        <ToolButton aria-label="Pan"><HandIcon fill="#f3e8d6" stroke="#a58e6e" /></ToolButton>
        <ToolButton $on aria-label="Attach"><ClipIcon /></ToolButton>
        <Down />
        <Sep />
        <ToolButton aria-label="Sync"><SyncIcon /></ToolButton>
      </ToolBar>
      <BookBody>
        <Options>
          <OptionsHead>
            <OptionsMenu>Options <Down /></OptionsMenu>
            <WinIcon kind="close" />
          </OptionsHead>
          <Scroller>
            <KeyList>
              {keys.map(k => <KeyItem key={k} $on={k === "H3117"}>{k}</KeyItem>)}
            </KeyList>
            <Track $top={27}><Thumb $h={16} /></Track>
          </Scroller>
        </Options>
        <Entry>
          <Headword>H3117 <Hebrew dir="rtl">יוֹם</Hebrew> <b>yowm</b> (yome) <a href="#n-m">n-m</a>.</Headword>
          <Sense>1. a day (as the warm hours), whether literal (from sunrise to sunset, or from one sunset to the next), or figurative (a space of time defined by an associated term), (often<br />used adverb)</Sense>
          <Gloss>[from an unused root meaning to be hot]</Gloss>
          <Gloss $italic>
            KJV: age, + always, + chronicals, continually(-ance), daily, ((birth-), each, to) day, (now a, two) days (agone), + elder, X end, + evening, + (for) ever(-lasting, -more), X full, life, as (so) long as (... live),<br />
            (even) now, + old, + outlived, + perpetually, presently, + remaineth, X required, season, X since, space, then, (process of) time, + as at other times, + in trouble, weather, (as) when, (a, the, within a)<br />
            while (that), X whole (+ age), (full) year(-ly), + younger.
          </Gloss>
          <Gloss>[-]</Gloss>
        </Entry>
        <Track $top={16}><Thumb $h={81} /></Track>
      </BookBody>
    </Book>
  )
}

export default function App() {
  return (
    <>
      <GlobalStyle />
      <Page>
        <Window>
          <TitleBar>
            <Logo>tW</Logo>
            <AppTitle>Ruth 1:1 - theWord</AppTitle>
            <WinButtons $gap={7}>
              <WinIcon kind="min" c="#fff" /><WinIcon kind="max" c="#fff" /><WinIcon kind="close" c="#fff" />
            </WinButtons>
          </TitleBar>
          <MainTools />
          <Work>
            <Left>
              <BibleTree />
              <BibleSearch />
            </Left>
            <DockBar />
            <BibleView />
          </Work>
          <BookView />
          <Status>
            Bible view [1]
            <StatusCell>Dct: days</StatusCell>
            <StatusCell>Cmt: Ruth 1:1</StatusCell>
            <StatusCell>Active: Bible view [1]</StatusCell>
            <StatusCell>Ruth 1:1-KJV</StatusCell>
          </Status>
          <Stamp>2026-02-04  19:04:58</Stamp>
          <Beam width="9" height="16" viewBox="0 0 9 16">
            <path d="M1 1h2l1.500 1L6 1h2M4.500 2v12M1 15h2l1.500-1L6 15h2" fill="none" stroke="#222" />
          </Beam>
        </Window>
      </Page>
    </>
  )
}
